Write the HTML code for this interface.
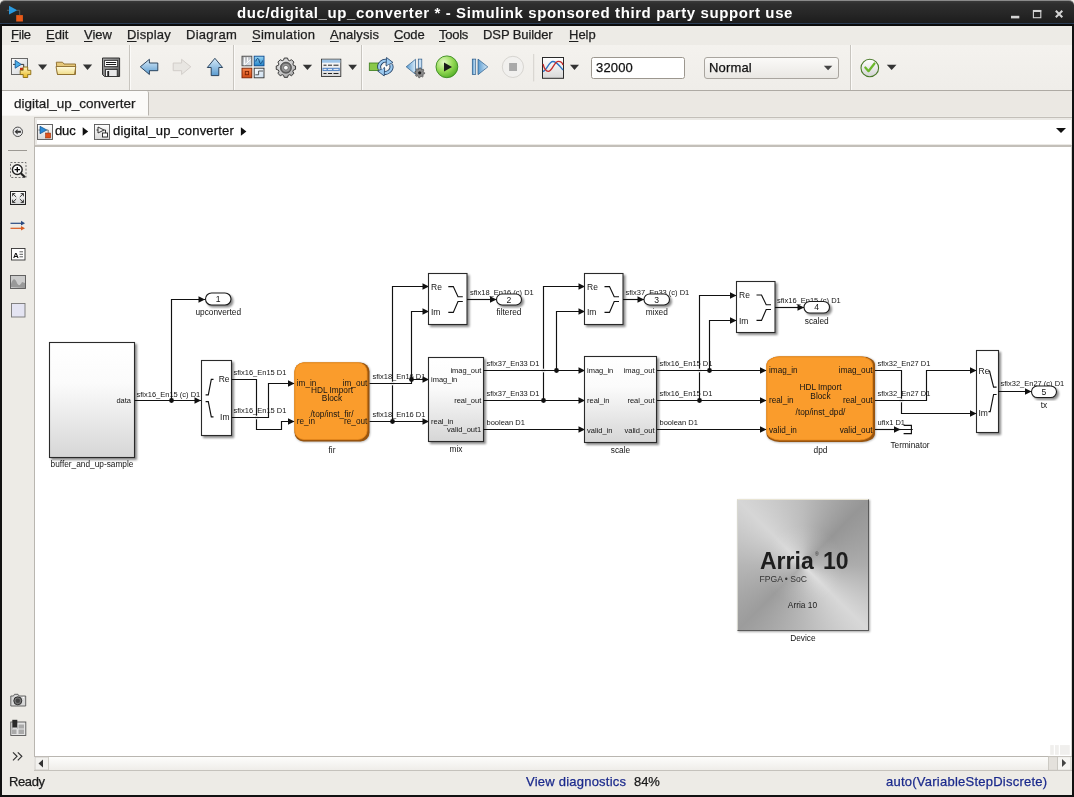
<!DOCTYPE html>
<html><head><meta charset="utf-8">
<style>
*{box-sizing:border-box}
svg,.a{will-change:transform}
.m,.st,.ui{-webkit-text-stroke:0.25px currentColor}
html,body{margin:0;padding:0;width:1074px;height:797px;overflow:hidden;background:#edebe6;font-family:"Liberation Sans",sans-serif;color:#1a1a1a}
.a{position:absolute}
#title{left:0;top:0;width:1074px;height:26px;background:linear-gradient(#3a3a3a 0px,#2e2e2e 3px,#262626 13px,#1c1c1c 22px,#2c3e56 22.5px,#2c3e56 23.5px,#0a0a0a 23.5px);border-top-left-radius:5px;border-top-right-radius:5px;border-top:1px solid #8a8a8a}
#title .t{left:237px;top:2.5px;white-space:nowrap;color:#fff;font-weight:bold;font-size:15px;letter-spacing:0.6px;line-height:18px}
#menubar{left:2px;top:26px;width:1070px;height:19px;background:#edebe6}
.m{top:2px;font-size:13px;line-height:16px;color:#1e1e1e}
.m u{text-decoration:underline;text-decoration-thickness:1px;text-underline-offset:2px}
#toolbar{left:2px;top:45px;width:1070px;height:46.5px;background:linear-gradient(#f4f2ee,#efede9);border-bottom:2.6px solid #aeaaa4}
.sep{top:45px;width:2px;height:44.5px;border-left:1px solid #c8c5bf;border-right:1px solid #fbfaf8}
.dd{width:0;height:0;border-left:5px solid transparent;border-right:5px solid transparent;border-top:5px solid #2a2a2a}
#tabbar{left:2px;top:91px;width:1070px;height:27px;background:#ebe8e3}
#tab{left:2px;top:91.3px;width:147px;height:25px;background:#fbfaf8;border-right:1px solid #b8b4ae;border-bottom:1px solid #f6f5f2;border-top-right-radius:2px}
#crumbrow{left:2px;top:116px;width:1070px;height:31px;background:#edebe6}
#crumb{left:33.5px;top:117px;width:1038.5px;height:28.5px;background:#fff;border-top:1px solid #c3bfb9;border-left:1px solid #c3bfb9;box-shadow:inset 0 0 0 2px #ebe9e5}
#palette{left:2px;top:147px;width:33px;height:610px;background:#edebe6}
#canvas{left:34px;top:145px;width:1038px;height:612px;background:#fff;border-left:1px solid #b9b6b0;border-top:2.6px solid #c3bfb9;border-right:1px solid #d8d6d2}
#hscroll{left:34px;top:756px;width:1038px;height:15px;background:linear-gradient(#fdfdfc,#efede9);border-top:1px solid #b9b6b0;border-bottom:1px solid #c5c2bc}
#status{left:2px;top:771px;width:1070px;height:24px;background:#edebe6}
.st{top:774px;font-size:13px;line-height:16px}
#frameL{left:0;top:24px;width:2px;height:773px;background:#111}
#frameR{left:1072px;top:24px;width:2px;height:773px;background:#111}
#frameB{left:0;top:795px;width:1074px;height:2px;background:#111}
</style></head><body>
<div id="title" class="a">
  <div class="a t">duc/digital_up_converter * - Simulink sponsored third party support use</div>
</div>
<div id="menubar" class="a"></div>
<div class="a m" style="left:11px;top:27px;letter-spacing:-0.3px"><u>F</u>ile</div>
<div class="a m" style="left:46px;top:27px;letter-spacing:0px"><u>E</u>dit</div>
<div class="a m" style="left:84px;top:27px;letter-spacing:0px"><u>V</u>iew</div>
<div class="a m" style="left:127px;top:27px;letter-spacing:0.19px"><u>D</u>isplay</div>
<div class="a m" style="left:186px;top:27px;letter-spacing:0.27px">Diagr<u>a</u>m</div>
<div class="a m" style="left:252px;top:27px;letter-spacing:0.26px"><u>S</u>imulation</div>
<div class="a m" style="left:330px;top:27px;letter-spacing:0.07px"><u>A</u>nalysis</div>
<div class="a m" style="left:394px;top:27px;letter-spacing:-0.15px"><u>C</u>ode</div>
<div class="a m" style="left:439px;top:27px;letter-spacing:-0.25px"><u>T</u>ools</div>
<div class="a m" style="left:483px;top:27px;letter-spacing:-0.09px">DSP Builder</div>
<div class="a m" style="left:569px;top:27px;letter-spacing:0px"><u>H</u>elp</div>

<div id="toolbar" class="a"></div>
<div class="a sep" style="left:129px"></div>
<div class="a sep" style="left:233px"></div>
<div class="a sep" style="left:361px"></div>
<div class="a sep" style="left:850px"></div>


<div id="tabbar" class="a"></div>
<div id="tab" class="a"></div>
<div class="a ui" style="left:14px;top:95px;font-size:13.5px;line-height:18px;color:#1e1e1e">digital_up_converter</div>

<div id="crumbrow" class="a"></div>
<div id="crumb" class="a"></div>
<!--CRUMB-->

<div id="palette" class="a"></div>
<!--PALETTE-->
<svg class="a" style="left:0;top:140px" width="40" height="630" viewBox="0 140 40 630">
<path d="M8,150.5 L27,150.5" stroke="#9c9993" stroke-width="1"/>
<rect x="10.5" y="162.5" width="15.5" height="15" fill="none" stroke="#666" stroke-width="0.9" stroke-dasharray="2,1.6"/>
<circle cx="17.3" cy="169.6" r="4.9" fill="#fff" stroke="#222" stroke-width="1.4"/>
<path d="M14.6,169.6 L20,169.6 M17.3,166.9 L17.3,172.3" stroke="#000" stroke-width="1.3"/>
<path d="M20.8,173.2 L25,177.3" stroke="#222" stroke-width="2.2"/>
<rect x="10.5" y="191.5" width="15" height="13" fill="url(#sc2)" stroke="#222" stroke-width="1"/>
<path d="M12.6,193.6 L16.2,197 M12.6,193.6 L15.3,193.6 M12.6,193.6 L12.6,196.3 M23.4,193.6 L19.8,197 M23.4,193.6 L20.7,193.6 M23.4,193.6 L23.4,196.3 M12.6,202.4 L16.2,199 M12.6,202.4 L15.3,202.4 M12.6,202.4 L12.6,199.7 M23.4,202.4 L19.8,199 M23.4,202.4 L20.7,202.4 M23.4,202.4 L23.4,199.7" stroke="#222" stroke-width="0.9" fill="none"/>
<path d="M10.5,223.3 L22,223.3" stroke="#2a4a80" stroke-width="1.2"/><path d="M21,220.8 L25,223.3 L21,225.5Z" fill="#2a4a80"/>
<path d="M10.5,228.3 L22,228.3" stroke="#d85a20" stroke-width="1.2"/><path d="M21,226 L25,228.3 L21,230.6Z" fill="#d85a20"/>
<rect x="11.5" y="248.5" width="13.5" height="11.5" fill="#fff" stroke="#333" stroke-width="0.9"/>
<text x="13" y="257.8" font-family="Liberation Sans, sans-serif" font-weight="bold" font-size="8" fill="#111">A</text>
<path d="M19.5,251.8 L23,251.8 M19.5,254.3 L23,254.3 M19.5,256.8 L23,256.8" stroke="#333" stroke-width="0.8"/>
<rect x="10.5" y="275.5" width="15" height="13" fill="#ccc" stroke="#555" stroke-width="0.9"/>
<path d="M11,287 L11,284 C13,278 15,278 17,283 C18.5,286 20,286 22,282 L25,283 L25,288 Z" fill="#999"/>
<rect x="11.5" y="303.5" width="13.5" height="13.5" fill="#e4e4f2" stroke="#777" stroke-width="0.9"/>
<path d="M10.8,696 L13.5,696 L14.5,694.3 L18,694.3 L19,696 L25.7,696 L25.7,706 L10.8,706Z" fill="#d8d8d8" stroke="#555" stroke-width="0.9"/>
<circle cx="17.8" cy="700.8" r="4" fill="#777" stroke="#222" stroke-width="0.9"/><circle cx="17.8" cy="700.8" r="2.2" fill="#444"/><circle cx="23.3" cy="697.5" r="0.7" fill="#fff"/>
<rect x="10.8" y="722" width="15" height="13.5" fill="#e4e4e4" stroke="#555" stroke-width="0.9"/>
<rect x="12.3" y="719.8" width="5" height="9" fill="#2a2a2a"/><rect x="12.3" y="727.5" width="5" height="1.8" fill="#ddd"/>
<rect x="12" y="729.5" width="4.5" height="4.5" fill="#aaa"/><rect x="18.5" y="724.5" width="5.5" height="4" fill="#aaa"/><rect x="18.5" y="729.5" width="5.5" height="4.5" fill="#aaa"/>
<path d="M13,752.3 L17,756.3 L13,760.3 M17.8,752.3 L21.8,756.3 L17.8,760.3" stroke="#333" stroke-width="1.2" fill="none"/>
<defs><linearGradient id="sc2" x1="0" y1="0" x2="0" y2="1"><stop offset="0" stop-color="#ffffff"/><stop offset="1" stop-color="#d8d8d8"/></linearGradient></defs>
</svg>
<!--/PALETTE-->
<div id="canvas" class="a"></div>
<div id="hscroll" class="a"></div>
<!--SCROLL-->
<svg class="a" style="top:740px;left:34px" width="1040" height="57" viewBox="34 740 1040 57">
<rect x="35" y="757" width="13.5" height="13" fill="#f2f1ee" stroke="#c5c2bc" stroke-width="0.8"/>
<path d="M38.5,763.5 L43,759.5 L43,767.5Z" fill="#333"/>
<rect x="1048.5" y="756.7" width="9" height="13.5" fill="#e4e1dc" stroke="#c5c2bc" stroke-width="0.8"/>
<rect x="1057.5" y="756.7" width="13.5" height="13.5" fill="#f6f5f2" stroke="#c5c2bc" stroke-width="0.8"/>
<path d="M1066.2,763 L1062,759.1 L1062,766.9Z" fill="#444"/>
<rect x="1050.2" y="745.1" width="3.6" height="9.7" fill="#f0efed"/><rect x="1055" y="745.1" width="3.8" height="9.7" fill="#f0efed"/><rect x="1060" y="745.1" width="9.8" height="9.7" fill="#f0efed"/>
<rect x="1069.0" y="781.5" width="1" height="1" fill="#c8c5c0"/>
<rect x="1066.0" y="784.5" width="1" height="1" fill="#c8c5c0"/>
<rect x="1069.0" y="784.5" width="1" height="1" fill="#c8c5c0"/>
<rect x="1063.0" y="787.5" width="1" height="1" fill="#c8c5c0"/>
<rect x="1066.0" y="787.5" width="1" height="1" fill="#c8c5c0"/>
<rect x="1069.0" y="787.5" width="1" height="1" fill="#c8c5c0"/>
<rect x="1060.0" y="790.5" width="1" height="1" fill="#c8c5c0"/>
<rect x="1063.0" y="790.5" width="1" height="1" fill="#c8c5c0"/>
<rect x="1066.0" y="790.5" width="1" height="1" fill="#c8c5c0"/>
<rect x="1069.0" y="790.5" width="1" height="1" fill="#c8c5c0"/>
</svg>
<!--/SCROLL-->

<div id="status" class="a"></div>
<div class="a st" style="left:8.5px;letter-spacing:-0.4px">Ready</div>
<div class="a st" style="left:525.7px;color:#1b2a8c;letter-spacing:0.23px">View diagnostics</div>
<div class="a st" style="left:633.6px;letter-spacing:-0.1px">84%</div>
<div class="a st" style="left:885.9px;color:#1b2a8c;letter-spacing:0.24px">auto(VariableStepDiscrete)</div>

<div class="a" style="left:737px;top:499px;width:132px;height:131.5px;background:radial-gradient(circle at 50% 50%,rgba(255,255,255,0.22) 0px,rgba(255,255,255,0) 40px),conic-gradient(from 0deg at 50% 50%,#bcbcbc 0deg,#969696 45deg,#acacac 90deg,#d8d8d8 135deg,#b8b8b8 180deg,#9c9c9c 225deg,#b6b6b6 270deg,#d6d6d6 315deg,#bcbcbc 360deg);border-top:1px solid #e8e4d4;border-left:1px solid #d8d8d0;border-right:1.5px solid #5a5a5a;border-bottom:1.5px solid #5a5a5a;box-shadow:1px 1px 2px rgba(0,0,0,0.35)"></div>
<!--TOOLBAR-->
<svg class="a" style="left:0;top:0" width="1074" height="150" viewBox="0 0 1074 150">
<defs>
<linearGradient id="pg" x1="0" y1="0" x2="1" y2="1"><stop offset="0" stop-color="#ffffff"/><stop offset="1" stop-color="#cfd2d6"/></linearGradient>
<linearGradient id="bl" x1="0" y1="0" x2="0" y2="1"><stop offset="0" stop-color="#d8ebf8"/><stop offset="1" stop-color="#5a9bd0"/></linearGradient>
<linearGradient id="blh" x1="0" y1="0" x2="1" y2="0"><stop offset="0" stop-color="#5a9bd0"/><stop offset="1" stop-color="#d8ebf8"/></linearGradient>
<linearGradient id="yl" x1="0" y1="0" x2="0" y2="1"><stop offset="0" stop-color="#fff6c0"/><stop offset="1" stop-color="#e8b820"/></linearGradient>
<linearGradient id="fd" x1="0" y1="0" x2="0" y2="1"><stop offset="0" stop-color="#fffbe0"/><stop offset="1" stop-color="#f0dc88"/></linearGradient>
<linearGradient id="fl" x1="0" y1="0" x2="1" y2="0"><stop offset="0" stop-color="#5a5a5a"/><stop offset="0.5" stop-color="#7a7a7a"/><stop offset="1" stop-color="#4a4a4a"/></linearGradient>
<radialGradient id="gr" cx="0.35" cy="0.3" r="0.8"><stop offset="0" stop-color="#e4f8c8"/><stop offset="0.5" stop-color="#98dc58"/><stop offset="1" stop-color="#4aa820"/></radialGradient>
<radialGradient id="gy" cx="0.4" cy="0.35" r="0.8"><stop offset="0" stop-color="#f4f4f4"/><stop offset="0.6" stop-color="#c4c4c4"/><stop offset="1" stop-color="#8a8a8a"/></radialGradient>
<linearGradient id="st" x1="0" y1="0" x2="0" y2="1"><stop offset="0" stop-color="#f4f3f1"/><stop offset="1" stop-color="#e2e0dc"/></linearGradient>
<linearGradient id="sc" x1="0" y1="0" x2="0" y2="1"><stop offset="0" stop-color="#ffffff"/><stop offset="1" stop-color="#d8d8d8"/></linearGradient>
<linearGradient id="fl2" x1="0" y1="0" x2="1" y2="1"><stop offset="0" stop-color="#a8a8a8"/><stop offset="0.6" stop-color="#7a7a7a"/><stop offset="1" stop-color="#4a4a4a"/></linearGradient>
<linearGradient id="tl" x1="0" y1="0" x2="1" y2="1"><stop offset="0" stop-color="#a8a8a8"/><stop offset="1" stop-color="#e4eef8"/></linearGradient>
<linearGradient id="trb" x1="0" y1="0" x2="0" y2="1"><stop offset="0" stop-color="#9ad6f4"/><stop offset="1" stop-color="#1e82c8"/></linearGradient>
<linearGradient id="blr" x1="0" y1="0" x2="0" y2="1"><stop offset="0" stop-color="#f6844a"/><stop offset="1" stop-color="#d04a14"/></linearGradient>
<linearGradient id="brw" x1="0" y1="0" x2="1" y2="1"><stop offset="0" stop-color="#ffffff"/><stop offset="1" stop-color="#c8dcee"/></linearGradient>
<linearGradient id="ck" x1="0" y1="0" x2="0" y2="1"><stop offset="0" stop-color="#ffffff"/><stop offset="1" stop-color="#d4d4d4"/></linearGradient>
<linearGradient id="nm" x1="0" y1="0" x2="0" y2="1"><stop offset="0" stop-color="#fbfaf8"/><stop offset="1" stop-color="#e9e7e3"/></linearGradient>
</defs>
<path d="M6.9,10.3 L9.5,10.3 M17,10.3 L19.7,10.3 L19.7,15" stroke="#6a6a6a" stroke-width="0.8" fill="none"/>
<path d="M9,5.8 L17.3,10.2 L9,14.6Z" fill="#2a9ae0"/>
<rect x="16.2" y="15.1" width="6.7" height="6.4" fill="#e85a18"/>
<rect x="1011" y="15.8" width="8.3" height="2.6" fill="#d4d4d4"/>
<rect x="1033.4" y="10.5" width="7.4" height="7.2" fill="none" stroke="#d4d4d4" stroke-width="1.1"/><rect x="1033" y="10" width="8.2" height="2" fill="#d4d4d4"/>
<path d="M1055.8,10.8 L1062.3,17.3 M1062.3,10.8 L1055.8,17.3" stroke="#d4d4d4" stroke-width="2"/>
<rect x="11.5" y="58.5" width="16" height="16" fill="url(#pg)" stroke="#5a5a5a" stroke-width="0.9"/>
<path d="M13,64.4 L15.5,64.4 M21,64.4 L23.7,64.4 L23.7,67.5" stroke="#222" stroke-width="0.9" fill="none"/>
<path d="M15.2,60.3 L21.2,64.4 L15.2,68.2Z" fill="#4aaee8" stroke="#1a5a98" stroke-width="0.9" stroke-linejoin="round"/>
<rect x="20" y="67.8" width="3.2" height="2.4" fill="#c82a10"/>
<path d="M23.2,67 L27.7,67 L27.7,70.3 L30.8,70.3 L30.8,74.6 L27.7,74.6 L27.7,77.5 L23.2,77.5 L23.2,74.6 L20.2,74.6 L20.2,70.3 L23.2,70.3Z" fill="url(#yl)" stroke="#8a6a10" stroke-width="0.9"/>
<path d="M38,64.6 L47.2,64.6 L42.6,70.1Z" fill="#333"/>
<path d="M56.3,62.2 L62.5,62.2 L64,64 L75.5,64 L75.5,74.5 L57.5,74.5Z" fill="#e6c87a" stroke="#8a6a2a" stroke-width="0.9"/>
<path d="M56,66.5 L75.8,66.5 L74.5,74.5 L57.5,74.5Z" fill="url(#fd)" stroke="#8a6a2a" stroke-width="0.9"/>
<path d="M82.9,64.6 L92.2,64.6 L87.55000000000001,70.1Z" fill="#333"/>
<path d="M102.5,58 L119.6,58 L119.6,76.5 L104.5,76.5 L102.5,74.5Z" fill="url(#fl2)" stroke="#222" stroke-width="0.9"/>
<rect x="104.6" y="60.4" width="13" height="6.2" fill="#fff" stroke="#333" stroke-width="0.9"/>
<path d="M106,62.5 L116.2,62.5 M106,64.5 L116.2,64.5" stroke="#000" stroke-width="0.9"/>
<rect x="105.6" y="69.4" width="11.6" height="7.1" fill="#e8e8e8" stroke="#222" stroke-width="0.8"/>
<rect x="106.2" y="70" width="2" height="6" fill="#fafafa"/><rect x="107.3" y="71" width="1.8" height="5.5" fill="#222"/>
<path d="M140.3,66.8 L149.4,59.3 L149.4,63 L157.8,63 L157.8,70.7 L149.4,70.7 L149.4,74.5Z" fill="url(#bl)" stroke="#1d3550" stroke-width="0.9" stroke-linejoin="round"/>
<path d="M190.8,66.8 L181.6,59.3 L181.6,63 L173.2,63 L173.2,70.7 L181.6,70.7 L181.6,74.5Z" fill="#e8e6e2" stroke="#cfcbc6" stroke-width="0.9" stroke-linejoin="round"/>
<path d="M214.9,58.3 L222.6,67.5 L218.8,67.5 L218.8,75.6 L211.2,75.6 L211.2,67.5 L207.3,67.5Z" fill="url(#bl)" stroke="#1d3550" stroke-width="0.9" stroke-linejoin="round"/>
<rect x="242" y="56.2" width="9.8" height="9.6" fill="url(#tl)" stroke="#4a4a4a" stroke-width="0.9"/>
<path d="M244.6,64.8 L244.6,57.3 M247.6,61.5 L247.6,57.3 M244.6,65 L250.8,59.5" stroke="#fff" stroke-width="1" fill="none"/>
<rect x="254.2" y="56.2" width="9.8" height="9.6" fill="url(#trb)" stroke="#0a4a90" stroke-width="0.9"/>
<path d="M255.8,61.5 C257,57.5 258.5,57.5 259.2,61 C260,64.5 261.5,64.5 262.6,60.5" stroke="#0a3a70" stroke-width="0.9" fill="none"/>
<rect x="242" y="68.2" width="9.8" height="9.6" fill="url(#blr)" stroke="#7a2000" stroke-width="0.9"/>
<rect x="245.3" y="71.4" width="3.3" height="3.3" fill="none" stroke="#7a2000" stroke-width="0.9"/>
<rect x="254.2" y="68.2" width="9.8" height="9.6" fill="url(#brw)" stroke="#333" stroke-width="0.9"/>
<path d="M255.3,74.8 L258.6,74.8 L258.6,71 L263,71" stroke="#444" stroke-width="0.9" fill="none"/>
<path d="M283.57,60.15 L284.24,58.04 L287.56,58.04 L288.23,60.15 L289.59,60.71 L291.56,59.70 L293.90,62.04 L292.89,64.01 L293.45,65.37 L295.56,66.04 L295.56,69.36 L293.45,70.03 L292.89,71.39 L293.90,73.36 L291.56,75.70 L289.59,74.69 L288.23,75.25 L287.56,77.36 L284.24,77.36 L283.57,75.25 L282.21,74.69 L280.24,75.70 L277.90,73.36 L278.91,71.39 L278.35,70.03 L276.24,69.36 L276.24,66.04 L278.35,65.37 L278.91,64.01 L277.90,62.04 L280.24,59.70 L282.21,60.71Z" fill="url(#gy)" stroke="#2a2a2a" stroke-width="0.9" stroke-linejoin="round"/>
<circle cx="285.9" cy="67.7" r="5.6" fill="#6a6a6a" stroke="#333" stroke-width="0.6"/>
<circle cx="285.9" cy="67.7" r="4" fill="#9a9a9a"/>
<circle cx="285.9" cy="67.7" r="2.3" fill="#fafafa" stroke="#333" stroke-width="0.5"/>
<path d="M302.8,64.8 L312.1,64.8 L307.45000000000005,70Z" fill="#333"/>
<rect x="321.5" y="59.2" width="19.3" height="17.3" fill="url(#sc)" stroke="#333" stroke-width="0.9"/>
<rect x="322" y="59.7" width="18.3" height="3" fill="#9cc4e8"/>
<path d="M323.5,65.2 L326.5,65.2 M328,65.2 L332,65.2 M333.5,65.2 L338.5,65.2 M323.5,73.5 L326.5,73.5 M328,73.5 L332,73.5 M333.5,73.5 L338.5,73.5" stroke="#222" stroke-width="1"/>
<rect x="322.5" y="67.8" width="17.3" height="3.2" fill="#5a8ac8"/>
<path d="M323.5,69.4 L326.5,69.4 M328,69.4 L332,69.4 M333.5,69.4 L338.5,69.4" stroke="#fff" stroke-width="0.9"/>
<path d="M348.2,64.8 L357,64.8 L352.6,70Z" fill="#333"/>
<rect x="369.3" y="63" width="9.5" height="7.5" fill="#8ac84a" stroke="#3a7a1a" stroke-width="0.8"/>
<path d="M379.5,69 A6.3,6.3 0 0 1 388.5,61.5" fill="none" stroke="#1d3a60" stroke-width="3.8"/>
<path d="M379.5,69 A6.3,6.3 0 0 1 388.5,61.5" fill="none" stroke="#9ccaf0" stroke-width="2.2"/>
<path d="M391.2,64.6 A6.3,6.3 0 0 1 382.2,72.1" fill="none" stroke="#1d3a60" stroke-width="3.8"/>
<path d="M391.2,64.6 A6.3,6.3 0 0 1 382.2,72.1" fill="none" stroke="#9ccaf0" stroke-width="2.2"/>
<path d="M386.5,57.5 L393,62.5 L386,66Z" fill="#9ccaf0" stroke="#1d3a60" stroke-width="0.8" stroke-linejoin="round"/>
<path d="M384.2,76 L377.7,71 L384.7,67.5Z" fill="#9ccaf0" stroke="#1d3a60" stroke-width="0.8" stroke-linejoin="round"/>
<path d="M382.3,68.8 C383.5,65 385,65 385.5,67 C386,69 387.5,68.5 388.5,64.8" stroke="#fff" stroke-width="1.1" fill="none"/>
<path d="M406.2,66.8 L415.5,59.3 L415.5,74.3Z" fill="url(#blh)" stroke="#2a5a88" stroke-width="0.7"/>
<rect x="418.3" y="59.1" width="3.5" height="10" fill="#c8e0f4" stroke="#2a5a88" stroke-width="0.7"/>
<path d="M424.70,72.80 L424.60,73.78 L423.21,74.25 L422.86,74.91 L423.24,76.34 L422.48,76.96 L421.15,76.31 L420.44,76.53 L419.70,77.80 L418.72,77.70 L418.25,76.31 L417.59,75.96 L416.16,76.34 L415.54,75.58 L416.19,74.25 L415.97,73.54 L414.70,72.80 L414.80,71.82 L416.19,71.35 L416.54,70.69 L416.16,69.26 L416.92,68.64 L418.25,69.29 L418.96,69.07 L419.70,67.80 L420.68,67.90 L421.15,69.29 L421.81,69.64 L423.24,69.26 L423.86,70.02 L423.21,71.35 L423.43,72.06Z" fill="#8a8a8a" stroke="#3a3a3a" stroke-width="0.6"/>
<circle cx="419.7" cy="72.8" r="1.6" fill="#222"/>
<circle cx="446.9" cy="66.8" r="10.9" fill="url(#gr)" stroke="#3a8a20" stroke-width="0.9"/>
<path d="M444,62.5 L452,66.9 L444,71.5Z" fill="#1a1a1a"/>
<rect x="472.3" y="59.1" width="3.4" height="15.5" fill="url(#blh)" stroke="#2a5a88" stroke-width="0.7"/>
<path d="M478,59.1 L487.8,66.9 L478,74.7Z" fill="url(#blh)" stroke="#2a5a88" stroke-width="0.7"/>
<circle cx="512.9" cy="66.9" r="10.6" fill="#f1f0ee" stroke="#d2d0cc" stroke-width="0.9"/>
<rect x="509.1" y="63" width="7.9" height="8" fill="#a9a9a9"/>
<rect x="533.2" y="54" width="1" height="27.4" fill="#d4d1cc"/>
<rect x="542.5" y="57.5" width="21" height="20.8" fill="url(#sc)" stroke="#2a2a2a" stroke-width="1"/>
<path d="M543,71.3 C546.5,71.5 548.5,61.5 553,61.5 C556.5,61.5 559.5,65.5 563,70" stroke="#2a72c4" stroke-width="1.3" fill="none"/>
<path d="M543,64 C544.5,69.5 546,71.3 548.2,71.3 C552.5,71.3 554,61.3 558.3,61.3 C561,61.3 562.5,63 563,65" stroke="#c42a2a" stroke-width="1.3" fill="none"/>
<path d="M570,64.8 L579,64.8 L574.5,70Z" fill="#333"/>
<rect x="591.5" y="57.5" width="93" height="21" rx="2" fill="#fff" stroke="#9c978f" stroke-width="1"/>
<rect x="704.5" y="57.5" width="134" height="21" rx="2.5" fill="url(#nm)" stroke="#a9a59f" stroke-width="1"/>
<path d="M823.8,65.8 L832.3,65.8 L828.05,70.2Z" fill="#444"/>
<circle cx="869.8" cy="68" r="8.8" fill="url(#ck)" stroke="#4a7a2a" stroke-width="1.1"/>
<path d="M865.3,67.5 L868.5,71.2 L874.5,63.5" stroke="#6ab82a" stroke-width="2.2" fill="none" stroke-linecap="round" stroke-linejoin="round"/>
<path d="M886.8,64.8 L896.5,64.8 L891.65,70.1Z" fill="#333"/>
<circle cx="17.8" cy="131.8" r="4.7" fill="#ececec" stroke="#4a4a4a" stroke-width="1"/>
<path d="M14.6,131.8 L17.6,129 L17.6,134.6Z" fill="#333"/><rect x="17.3" y="130.8" width="3.6" height="2" fill="#333"/>
<rect x="37.5" y="124.5" width="15" height="15" fill="url(#sc)" stroke="#555" stroke-width="0.9"/>
<path d="M38.5,130 L40,130" stroke="#333" stroke-width="0.7"/><path d="M40,126.3 L46.8,130 L40,133.7Z" fill="#2a8ad8" stroke="#10508a" stroke-width="0.7"/>
<path d="M46.5,130 L48.2,130 L48.2,133" stroke="#555" fill="none" stroke-width="0.8"/>
<rect x="45.5" y="133" width="5.2" height="5" fill="#e0501a" stroke="#8a2a0a" stroke-width="0.5"/>
<path d="M82.7,127.3 L88.2,131.5 L82.7,135.7Z" fill="#111"/>
<rect x="94.5" y="124.5" width="15" height="15" fill="url(#sc)" stroke="#555" stroke-width="0.9"/>
<path d="M96.5,130 L98,130 M98,127 L104,130 L98,133Z M104,130 L105.5,130 L105.5,133" stroke="#222" stroke-width="0.9" fill="none"/>
<rect x="102.5" y="133" width="5" height="4" fill="#fff" stroke="#222" stroke-width="0.9"/>
<path d="M240.9,127.3 L246.4,131.5 L240.9,135.7Z" fill="#111"/>
<path d="M1056,128 L1066,128 L1061,133Z" fill="#111"/>
</svg>
<!--/TOOLBAR-->
<div class="a ui" style="left:595.5px;top:60px;font-size:13px;line-height:16px;color:#111;letter-spacing:0.17px">32000</div>
<div class="a ui" style="left:709.3px;top:60px;font-size:13px;line-height:16px;color:#111;letter-spacing:0.15px">Normal</div>
<div class="a ui" style="left:55px;top:123px;font-size:13px;line-height:16px;color:#111;letter-spacing:-0.15px">duc</div>
<div class="a ui" style="left:112.5px;top:123px;font-size:13px;line-height:16px;color:#111;letter-spacing:0.2px">digital_up_converter</div>

<!--DIAGRAM-->
<svg class="a" style="left:0;top:0" width="1074" height="797" viewBox="0 0 1074 797" font-family="Liberation Sans, sans-serif">
<defs>
<linearGradient id="gg" x1="0" y1="0" x2="0" y2="1"><stop offset="0" stop-color="#ffffff"/><stop offset="0.35" stop-color="#fbfbfb"/><stop offset="1" stop-color="#d6d6d6"/></linearGradient>
<filter id="sh" x="-20%" y="-20%" width="150%" height="150%"><feGaussianBlur in="SourceAlpha" stdDeviation="1"/><feOffset dx="1.5" dy="1.5"/><feComponentTransfer><feFuncA type="linear" slope="0.45"/></feComponentTransfer><feMerge><feMergeNode/><feMergeNode in="SourceGraphic"/></feMerge></filter>
<filter id="bl1" x="-20%" y="-20%" width="150%" height="150%"><feGaussianBlur stdDeviation="1"/></filter>
<filter id="sh2" x="-20%" y="-20%" width="150%" height="150%"><feGaussianBlur in="SourceAlpha" stdDeviation="1"/><feOffset dx="1.5" dy="1.5"/><feComponentTransfer><feFuncA type="linear" slope="0.35"/></feComponentTransfer><feMerge><feMergeNode/><feMergeNode in="SourceGraphic"/></feMerge></filter>
<linearGradient id="chip" x1="1" y1="0" x2="0" y2="1"><stop offset="0" stop-color="#8e8e8e"/><stop offset="0.25" stop-color="#b4b4b4"/><stop offset="0.5" stop-color="#dedede"/><stop offset="0.75" stop-color="#b4b4b4"/><stop offset="1" stop-color="#909090"/></linearGradient>
<radialGradient id="chip2" cx="0.5" cy="0.5" r="0.7"><stop offset="0" stop-color="#ffffff" stop-opacity="0.25"/><stop offset="0.6" stop-color="#ffffff" stop-opacity="0.05"/><stop offset="1" stop-color="#000000" stop-opacity="0.08"/></radialGradient>
</defs>
<style>.ln{fill:none;stroke:#111;stroke-width:1.15}.ar{fill:#111;stroke:none}</style>
<rect x="49.5" y="342.5" width="85" height="115" fill="url(#gg)" stroke="#2a2a2a" stroke-width="1.1" filter="url(#sh)"/>
<text x="131" y="403.3" font-size="7.5" text-anchor="end" fill="#141414" >data</text>
<text x="92" y="467.3" font-size="8.3" text-anchor="middle" fill="#141414" >buffer_and_up-sample</text>
<path d="M134.5,400.5 L201,400.5" class="ln"/>
<path d="M194.5,397.2 L201,400.5 L194.5,403.8Z" class="ar"/>
<circle cx="171.5" cy="400.5" r="2.4" class="ar"/>
<path d="M171.5,400.5 L171.5,299.5 L205,299.5" class="ln"/>
<path d="M198.5,296.2 L205,299.5 L198.5,302.8Z" class="ar"/>
<text x="136.5" y="396.65" font-size="7.5" text-anchor="start" fill="#141414" >sfix16_En15 (c) D1</text>
<rect x="205.5" y="293" width="25.5" height="12" rx="6.0" ry="6.0" fill="#fff" stroke="#1a1a1a" stroke-width="1.1" filter="url(#sh)"/>
<text x="218.25" y="302.0" font-size="8.6" text-anchor="middle" fill="#141414" >1</text>
<text x="218.25" y="315" font-size="8.3" text-anchor="middle" fill="#141414" >upconverted</text>
<rect x="201.5" y="360.5" width="30" height="75" fill="#fff" stroke="#2a2a2a" stroke-width="1.1" filter="url(#sh)"/>
<text x="229.5" y="382.3" font-size="8.5" text-anchor="end" fill="#141414" >Re</text>
<text x="229.5" y="420.3" font-size="8.5" text-anchor="end" fill="#141414" >Im</text>
<path d="M213.5,379.3 L211.3,379.3 L208.3,394.8 L205.6,394.8" class="ln"/>
<path d="M205.6,401.6 L208.3,401.6 L211.3,416.8 L213.5,416.8" class="ln"/>
<path d="M231.5,379.5 L256.5,379.5 L256.5,429.5 L281.5,429.5 L281.5,421.5 L294.5,421.5" class="ln"/>
<path d="M288.0,418.2 L294.5,421.5 L288.0,424.8Z" class="ar"/>
<path d="M231.5,417.5 L268.5,417.5 L268.5,383.5 L294.5,383.5" class="ln"/>
<path d="M288.0,380.2 L294.5,383.5 L288.0,386.8Z" class="ar"/>
<text x="233.5" y="375.15" font-size="7.5" text-anchor="start" fill="#141414" >sfix16_En15 D1</text>
<text x="233.5" y="413.15" font-size="7.5" text-anchor="start" fill="#141414" >sfix16_En15 D1</text>
<rect x="295.0" y="363.0" width="75" height="79" rx="9" ry="9" fill="#000" opacity="0.35" filter="url(#bl1)"/>
<rect x="294.5" y="362.5" width="75" height="79" rx="9" ry="9" fill="#98540e"/>
<rect x="294.5" y="362.5" width="72.6" height="77" rx="9" ry="9" fill="#fa9c2c"/>
<rect x="294.9" y="362.9" width="72.2" height="76.6" rx="9" ry="9" fill="none" stroke="#e8891c" stroke-width="0.8"/>
<text x="296.8" y="386.3" font-size="8.2" text-anchor="start" fill="#141414" >im_in</text>
<text x="367.3" y="386.3" font-size="8.2" text-anchor="end" fill="#141414" >im_out</text>
<text x="296.8" y="424.3" font-size="8.2" text-anchor="start" fill="#141414" >re_in</text>
<text x="367.3" y="424.3" font-size="8.2" text-anchor="end" fill="#141414" >re_out</text>
<text x="332" y="392.8" font-size="8.3" text-anchor="middle" fill="#141414" >HDL Import</text>
<text x="332" y="400.5" font-size="8.3" text-anchor="middle" fill="#141414" >Block</text>
<text x="332" y="417.3" font-size="8.3" text-anchor="middle" fill="#141414" >/top/inst_fir/</text>
<text x="332" y="452.5" font-size="8.3" text-anchor="middle" fill="#141414" >fir</text>
<path d="M369.5,383.5 L411.5,383.5 L411.5,379.5 L429,379.5" class="ln"/>
<path d="M422.5,376.2 L429,379.5 L422.5,382.8Z" class="ar"/>
<circle cx="411.5" cy="379.5" r="2.4" class="ar"/>
<path d="M411.5,379.5 L411.5,311.5 L429,311.5" class="ln"/>
<path d="M422.5,308.2 L429,311.5 L422.5,314.8Z" class="ar"/>
<path d="M369.5,421.5 L429,421.5" class="ln"/>
<path d="M422.5,418.2 L429,421.5 L422.5,424.8Z" class="ar"/>
<circle cx="392.5" cy="421.5" r="2.4" class="ar"/>
<path d="M392.5,421.5 L392.5,286.5 L429,286.5" class="ln"/>
<path d="M422.5,283.2 L429,286.5 L422.5,289.8Z" class="ar"/>
<text x="372.5" y="378.65" font-size="7.5" text-anchor="start" fill="#141414" >sfix18_En16 D1</text>
<text x="372.5" y="416.95" font-size="7.5" text-anchor="start" fill="#141414" >sfix18_En16 D1</text>
<rect x="428.5" y="273.5" width="38.5" height="51" fill="#fff" stroke="#2a2a2a" stroke-width="1.1" filter="url(#sh)"/>
<text x="431" y="289.5" font-size="8.5" text-anchor="start" fill="#141414" >Re</text>
<text x="431" y="314.7" font-size="8.5" text-anchor="start" fill="#141414" >Im</text>
<path d="M448.3,286.6 L453.3,286.6 L458.0,296.7 L462.8,296.7" class="ln"/>
<path d="M462.8,301.5 L458.0,301.5 L453.3,312.4 L448.3,312.4" class="ln"/>
<path d="M467,299.5 L496.5,299.5" class="ln"/>
<path d="M490.0,296.2 L496.5,299.5 L490.0,302.8Z" class="ar"/>
<text x="470" y="294.65" font-size="7.5" text-anchor="start" fill="#141414" >sfix18_En16 (c) D1</text>
<rect x="496.5" y="294" width="25" height="11" rx="5.5" ry="5.5" fill="#fff" stroke="#1a1a1a" stroke-width="1.1" filter="url(#sh)"/>
<text x="509.0" y="302.5" font-size="8.6" text-anchor="middle" fill="#141414" >2</text>
<text x="509.0" y="315.3" font-size="8.3" text-anchor="middle" fill="#141414" >filtered</text>
<rect x="428.5" y="357.5" width="55" height="84" fill="url(#gg)" stroke="#2a2a2a" stroke-width="1.1" filter="url(#sh)"/>
<text x="481.3" y="373.3" font-size="7.5" text-anchor="end" fill="#141414" >imag_out</text>
<text x="481.3" y="403.3" font-size="7.5" text-anchor="end" fill="#141414" >real_out</text>
<text x="481.3" y="432.3" font-size="7.5" text-anchor="end" fill="#141414" >valid_out1</text>
<text x="431" y="381.8" font-size="7.5" text-anchor="start" fill="#141414" >imag_in</text>
<text x="431" y="424.3" font-size="7.5" text-anchor="start" fill="#141414" >real_in</text>
<text x="456" y="452.3" font-size="8.3" text-anchor="middle" fill="#141414" >mix</text>
<path d="M483.5,370.5 L585,370.5" class="ln"/>
<path d="M578.5,367.2 L585,370.5 L578.5,373.8Z" class="ar"/>
<circle cx="556.5" cy="370.5" r="2.4" class="ar"/>
<path d="M556.5,370.5 L556.5,311.5 L585,311.5" class="ln"/>
<path d="M578.5,308.2 L585,311.5 L578.5,314.8Z" class="ar"/>
<path d="M483.5,400.5 L585,400.5" class="ln"/>
<path d="M578.5,397.2 L585,400.5 L578.5,403.8Z" class="ar"/>
<circle cx="543.5" cy="400.5" r="2.4" class="ar"/>
<path d="M543.5,400.5 L543.5,286.5 L585,286.5" class="ln"/>
<path d="M578.5,283.2 L585,286.5 L578.5,289.8Z" class="ar"/>
<path d="M483.5,429.5 L585,429.5" class="ln"/>
<path d="M578.5,426.2 L585,429.5 L578.5,432.8Z" class="ar"/>
<text x="486.5" y="365.65" font-size="7.5" text-anchor="start" fill="#141414" >sfix37_En33 D1</text>
<text x="486.5" y="395.65" font-size="7.5" text-anchor="start" fill="#141414" >sfix37_En33 D1</text>
<text x="486.5" y="424.65" font-size="7.5" text-anchor="start" fill="#141414" >boolean D1</text>
<rect x="584.5" y="273.5" width="38.5" height="51" fill="#fff" stroke="#2a2a2a" stroke-width="1.1" filter="url(#sh)"/>
<text x="587" y="289.5" font-size="8.5" text-anchor="start" fill="#141414" >Re</text>
<text x="587" y="314.7" font-size="8.5" text-anchor="start" fill="#141414" >Im</text>
<path d="M604.5,286.6 L609.5,286.6 L614.2,296.7 L619.0,296.7" class="ln"/>
<path d="M619.0,301.5 L614.2,301.5 L609.5,312.4 L604.5,312.4" class="ln"/>
<path d="M623,299.5 L644,299.5" class="ln"/>
<path d="M637.5,296.2 L644,299.5 L637.5,302.8Z" class="ar"/>
<text x="625.5" y="294.65" font-size="7.5" text-anchor="start" fill="#141414" >sfix37_En33 (c) D1</text>
<rect x="644" y="294" width="25.5" height="11" rx="5.5" ry="5.5" fill="#fff" stroke="#1a1a1a" stroke-width="1.1" filter="url(#sh)"/>
<text x="656.75" y="302.5" font-size="8.6" text-anchor="middle" fill="#141414" >3</text>
<text x="656.75" y="315.3" font-size="8.3" text-anchor="middle" fill="#141414" >mixed</text>
<rect x="584.5" y="356.5" width="72" height="86" fill="url(#gg)" stroke="#2a2a2a" stroke-width="1.1" filter="url(#sh)"/>
<text x="587" y="373.3" font-size="7.5" text-anchor="start" fill="#141414" >imag_in</text>
<text x="587" y="403" font-size="7.5" text-anchor="start" fill="#141414" >real_in</text>
<text x="587" y="432.5" font-size="7.5" text-anchor="start" fill="#141414" >valid_in</text>
<text x="654.5" y="373.3" font-size="7.5" text-anchor="end" fill="#141414" >imag_out</text>
<text x="654.5" y="403" font-size="7.5" text-anchor="end" fill="#141414" >real_out</text>
<text x="654.5" y="432.5" font-size="7.5" text-anchor="end" fill="#141414" >valid_out</text>
<text x="620.5" y="453" font-size="8.3" text-anchor="middle" fill="#141414" >scale</text>
<path d="M657,370.5 L766.5,370.5" class="ln"/>
<path d="M760.0,367.2 L766.5,370.5 L760.0,373.8Z" class="ar"/>
<circle cx="709.5" cy="370.5" r="2.4" class="ar"/>
<path d="M709.5,370.5 L709.5,320.5 L736.5,320.5" class="ln"/>
<path d="M730.0,317.2 L736.5,320.5 L730.0,323.8Z" class="ar"/>
<path d="M657,400.5 L766.5,400.5" class="ln"/>
<path d="M760.0,397.2 L766.5,400.5 L760.0,403.8Z" class="ar"/>
<circle cx="699.5" cy="400.5" r="2.4" class="ar"/>
<path d="M699.5,400.5 L699.5,295.5 L736.5,295.5" class="ln"/>
<path d="M730.0,292.2 L736.5,295.5 L730.0,298.8Z" class="ar"/>
<path d="M657,429.5 L766.5,429.5" class="ln"/>
<path d="M760.0,426.2 L766.5,429.5 L760.0,432.8Z" class="ar"/>
<text x="659.5" y="365.65" font-size="7.5" text-anchor="start" fill="#141414" >sfix16_En15 D1</text>
<text x="659.5" y="395.65" font-size="7.5" text-anchor="start" fill="#141414" >sfix16_En15 D1</text>
<text x="659.5" y="424.65" font-size="7.5" text-anchor="start" fill="#141414" >boolean D1</text>
<rect x="736.5" y="281.5" width="38.5" height="51" fill="#fff" stroke="#2a2a2a" stroke-width="1.1" filter="url(#sh)"/>
<text x="739" y="298.2" font-size="8.5" text-anchor="start" fill="#141414" >Re</text>
<text x="739" y="323.5" font-size="8.5" text-anchor="start" fill="#141414" >Im</text>
<path d="M756.5,295 L761.5,295 L766.2,304.7 L771.0,304.7" class="ln"/>
<path d="M771.0,309.5 L766.2,309.5 L761.5,320.4 L756.5,320.4" class="ln"/>
<path d="M775,307.5 L804,307.5" class="ln"/>
<path d="M797.5,304.2 L804,307.5 L797.5,310.8Z" class="ar"/>
<text x="777" y="302.65" font-size="7.5" text-anchor="start" fill="#141414" >sfix16_En15 (c) D1</text>
<rect x="804" y="301.5" width="25.5" height="11.5" rx="5.75" ry="5.75" fill="#fff" stroke="#1a1a1a" stroke-width="1.1" filter="url(#sh)"/>
<text x="816.75" y="310.25" font-size="8.6" text-anchor="middle" fill="#141414" >4</text>
<text x="816.75" y="323.5" font-size="8.3" text-anchor="middle" fill="#141414" >scaled</text>
<rect x="767.0" y="357.0" width="108.5" height="85.5" rx="13" ry="8.5" fill="#000" opacity="0.35" filter="url(#bl1)"/>
<rect x="766.5" y="356.5" width="108.5" height="85.5" rx="13" ry="8.5" fill="#98540e"/>
<rect x="766.5" y="356.5" width="106.1" height="83.5" rx="13" ry="8.5" fill="#fa9c2c"/>
<rect x="766.9" y="356.9" width="105.7" height="83.1" rx="13" ry="8.5" fill="none" stroke="#e8891c" stroke-width="0.8"/>
<text x="769" y="373.3" font-size="8.2" text-anchor="start" fill="#141414" >imag_in</text>
<text x="769" y="403" font-size="8.2" text-anchor="start" fill="#141414" >real_in</text>
<text x="769" y="432.5" font-size="8.2" text-anchor="start" fill="#141414" >valid_in</text>
<text x="872.5" y="373.3" font-size="8.2" text-anchor="end" fill="#141414" >imag_out</text>
<text x="872.5" y="403" font-size="8.2" text-anchor="end" fill="#141414" >real_out</text>
<text x="872.5" y="432.5" font-size="8.2" text-anchor="end" fill="#141414" >valid_out</text>
<text x="820.5" y="390.3" font-size="8.3" text-anchor="middle" fill="#141414" >HDL Import</text>
<text x="820.5" y="399.2" font-size="8.3" text-anchor="middle" fill="#141414" >Block</text>
<text x="820.5" y="415.3" font-size="8.3" text-anchor="middle" fill="#141414" >/top/inst_dpd/</text>
<text x="820.5" y="453" font-size="8.3" text-anchor="middle" fill="#141414" >dpd</text>
<path d="M875,370.5 L901.5,370.5 L901.5,413.5 L976.5,413.5" class="ln"/>
<path d="M970.0,410.2 L976.5,413.5 L970.0,416.8Z" class="ar"/>
<path d="M875,400.5 L926.5,400.5 L926.5,370.5 L976.5,370.5" class="ln"/>
<path d="M970.0,367.2 L976.5,370.5 L970.0,373.8Z" class="ar"/>
<path d="M875,429.5 L900.5,429.5" class="ln"/>
<path d="M894.0,426.2 L900.5,429.5 L894.0,432.8Z" class="ar"/>
<text x="877.5" y="365.65" font-size="7.5" text-anchor="start" fill="#141414" >sfix32_En27 D1</text>
<text x="877.5" y="395.65" font-size="7.5" text-anchor="start" fill="#141414" >sfix32_En27 D1</text>
<text x="877.5" y="424.65" font-size="7.5" text-anchor="start" fill="#141414" >ufix1 D1</text>
<path d="M903.6,425.3 L911.4,425.3 L911.4,433.6 L903.6,433.6 M900,429.5 L912.7,429.5" class="ln"/>
<text x="910" y="448" font-size="8.3" text-anchor="middle" fill="#141414" >Terminator</text>
<rect x="976.5" y="350.5" width="22" height="82" fill="#fff" stroke="#2a2a2a" stroke-width="1.1" filter="url(#sh)"/>
<text x="978.5" y="373.8" font-size="8.5" text-anchor="start" fill="#141414" >Re</text>
<text x="978.5" y="416" font-size="8.5" text-anchor="start" fill="#141414" >Im</text>
<path d="M989.4,370.5 L993.6,387.1 L996.6,387.1" class="ln"/>
<path d="M996.6,394.5 L993.6,394.5 L990.2,411.6 L988.5,411.6" class="ln"/>
<path d="M998.5,391.5 L1031.5,391.5" class="ln"/>
<path d="M1025.0,388.2 L1031.5,391.5 L1025.0,394.8Z" class="ar"/>
<text x="1000.5" y="386.15" font-size="7.5" text-anchor="start" fill="#141414" >sfix32_En27 (c) D1</text>
<rect x="1031.5" y="386" width="25" height="11.5" rx="5.75" ry="5.75" fill="#fff" stroke="#1a1a1a" stroke-width="1.1" filter="url(#sh)"/>
<text x="1044.0" y="394.75" font-size="8.6" text-anchor="middle" fill="#141414" >5</text>
<text x="1044.0" y="408" font-size="8.3" text-anchor="middle" fill="#141414" >tx</text>
<rect x="391.3" y="381.7" width="2.4" height="3.6" fill="#fff"/>
<path d="M390.5,383.5 L394.5,383.5" class="ln"/>
<rect x="542.3" y="368.7" width="2.4" height="3.6" fill="#fff"/>
<path d="M541.5,370.5 L545.5,370.5" class="ln"/>
<rect x="698.3" y="368.7" width="2.4" height="3.6" fill="#fff"/>
<path d="M697.5,370.5 L701.5,370.5" class="ln"/>
<rect x="900.3" y="398.7" width="2.4" height="3.6" fill="#fff"/>
<path d="M899.5,400.5 L903.5,400.5" class="ln"/>
<rect x="255.3" y="415.7" width="2.4" height="3.6" fill="#fff"/>
<path d="M254.5,417.5 L258.5,417.5" class="ln"/>
<text x="760" y="568.5" font-size="23" text-anchor="start" fill="#1e1e1e" font-weight="bold">Arria</text>
<text x="815" y="556" font-size="5" text-anchor="start" fill="#333" >®</text>
<text x="823" y="568.5" font-size="23" text-anchor="start" fill="#1e1e1e" font-weight="bold">10</text>
<text x="759.5" y="582.3" font-size="8.6" text-anchor="start" fill="#333" >FPGA • SoC</text>
<text x="802.5" y="608" font-size="8.4" text-anchor="middle" fill="#222" >Arria 10</text>
<text x="802.9" y="640.6" font-size="8.3" text-anchor="middle" fill="#141414" >Device</text>
</svg>
<!--/DIAGRAM-->

<div id="frameL" class="a"></div>
<div id="frameR" class="a"></div>
<div id="frameB" class="a"></div>
</body></html>
